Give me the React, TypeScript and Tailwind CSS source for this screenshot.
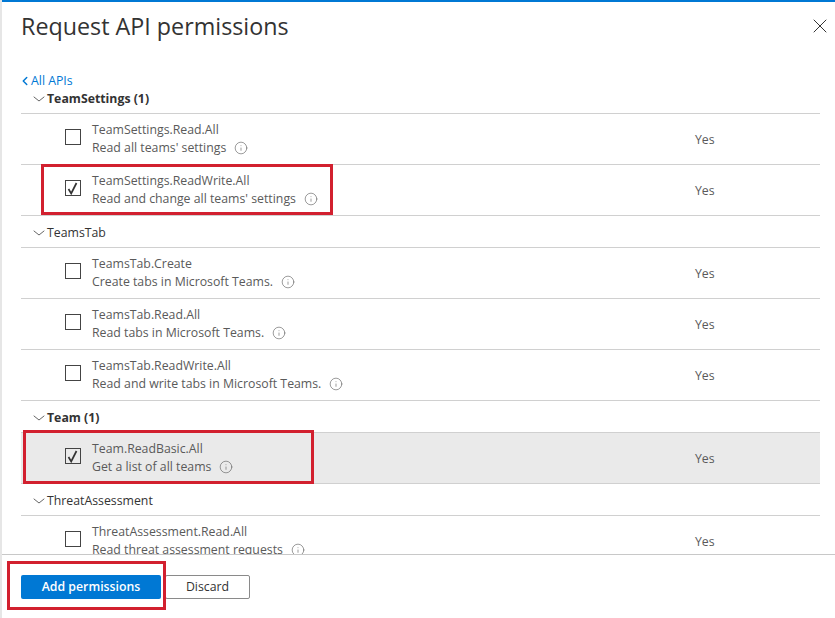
import { ChevronDown, ChevronLeft, X, Info } from "lucide-react";

type Perm = { name: string; desc: string; checked?: boolean; selected?: boolean };
type Group = { title: string; bold?: boolean; first?: boolean; perms: Perm[] };

const groups: Group[] = [
  {
    title: "TeamSettings (1)",
    bold: true,
    first: true,
    perms: [
      { name: "TeamSettings.Read.All", desc: "Read all teams' settings" },
      { name: "TeamSettings.ReadWrite.All", desc: "Read and change all teams' settings", checked: true },
    ],
  },
  {
    title: "TeamsTab",
    perms: [
      { name: "TeamsTab.Create", desc: "Create tabs in Microsoft Teams." },
      { name: "TeamsTab.Read.All", desc: "Read tabs in Microsoft Teams." },
      { name: "TeamsTab.ReadWrite.All", desc: "Read and write tabs in Microsoft Teams." },
    ],
  },
  {
    title: "Team (1)",
    bold: true,
    perms: [{ name: "Team.ReadBasic.All", desc: "Get a list of all teams", checked: true, selected: true }],
  },
  {
    title: "ThreatAssessment",
    perms: [{ name: "ThreatAssessment.Read.All", desc: "Read threat assessment requests" }],
  },
];

function PermRow({ perm }: { perm: Perm }) {
  return (
    <div className={`flex h-[51px] items-center border-b border-[#d0d0d0] ${perm.selected ? "bg-[#eaeaea]" : ""}`}>
      <div className="mb-[4px] ml-[43.5px] flex h-[16px] w-[16px] shrink-0 items-center justify-center border-[1.5px] border-[#444]">
        {perm.checked ? (
          <svg width="13" height="13" viewBox="0 0 13 13" fill="none" stroke="#333" strokeWidth="1.7">
            <path d="M2.5 7 L5.2 11.5 L10.5 1" />
          </svg>
        ) : null}
      </div>
      <div className="ml-[11.5px] w-[603px] text-[12.3px] leading-[18px] text-[#5a5a5a]">
        <div>{perm.name}</div>
        <div className="flex items-center gap-[8px]">
          {perm.desc}
          <Info size={14} strokeWidth={1} className="text-[#555]" />
        </div>
      </div>
      <span className="mt-[2px] text-[12.3px] text-[#5a5a5a]">Yes</span>
    </div>
  );
}

export default function App() {
  return (
    <div className="relative flex h-[618px] w-[835px] flex-col overflow-hidden border-l-2 border-[#e6e6e6] bg-white font-['Open_Sans','Noto_Sans',sans-serif]">
      <div className="-ml-[2px] h-[2px] shrink-0 bg-[#0078d4]" />
      <div className="flex h-[71px] shrink-0 justify-between pl-[19px] pr-[3px] pt-[6px]">
        <h1 className="text-[23.3px] leading-[36px] text-[#333]">Request API permissions</h1>
        <X size={24} strokeWidth={1} className="mt-[6px] text-[#333]" />
      </div>
      <div className="flex h-[481px] shrink-0 flex-col overflow-hidden pl-[19px] pr-[15px]">
        <a className="flex h-[16px] shrink-0 items-center text-[12.3px] text-[#0078d4]">
          <ChevronLeft size={14} strokeWidth={2.5} className="-ml-[3px] -mr-[1px]" />
          All APIs
        </a>
        {groups.map((g) => (
          <div key={g.title} className="shrink-0">
            <div
              className={`flex items-center border-b border-[#d0d0d0] pl-[11px] text-[12.3px] text-[#333] ${g.bold ? "font-bold" : ""} ${g.first ? "h-[25px] pb-[4px]" : "h-[32px] pt-[3px]"}`}
            >
              <ChevronDown size={16} strokeWidth={1} className="-ml-[1px] shrink-0 scale-x-125" />
              {g.title}
            </div>
            {g.perms.map((p) => (
              <PermRow key={p.name} perm={p} />
            ))}
          </div>
        ))}
      </div>
      <div className="-ml-[2px] flex h-[64px] shrink-0 items-start gap-[4px] border-t border-[#c8c8c8] pl-[21px] pt-[20px]">
        <button className="h-[24px] w-[140px] rounded-[2px] bg-[#0078d4] text-[12.3px] font-semibold text-white">
          Add permissions
        </button>
        <button className="h-[24px] w-[85px] rounded-[2px] border border-[#8a8a8a] bg-white text-[12.3px] text-[#333]">
          Discard
        </button>
      </div>

      {/* red annotation boxes */}
      <div className="absolute left-[39px] top-[164px] h-[51px] w-[292px] border-[3px] border-[#d2202f]" />
      <div className="absolute left-[21px] top-[430px] h-[54px] w-[291px] border-[3px] border-[#d2202f]" />
      <div className="absolute left-[5px] top-[561px] h-[49px] w-[159px] border-[3px] border-[#d2202f]" />
    </div>
  );
}
